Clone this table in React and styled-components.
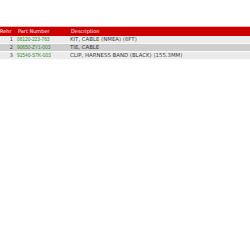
import styled, { createGlobalStyle } from "styled-components"

const GlobalStyle = createGlobalStyle`
  html, body {
    margin: 0;
    padding: 0;
    background: #fff;
  }
  body {
    font-family: "DejaVu Sans", Verdana, sans-serif;
  }
`

const Page = styled.div`
  padding-top: 26px;
`

const Table = styled.table`
  width: 100%;
  table-layout: fixed;
  border-collapse: collapse;
  border-top: 1px solid #f4b8b8;
  font-size: 5px;
  line-height: 7px;
`

const HeadCell = styled.th`
  background: #cc0000;
  color: #fff;
  font-weight: normal;
  text-align: left;
  padding: 0 0 0 ${(p) => p.$pad ?? 1}px;
  height: 9px;
  white-space: nowrap;
  overflow: hidden;
  width: ${(p) => p.$w || "auto"};
`

const Row = styled.tr`
  background: ${(p) => (p.$alt ? "#cecece" : "#ececec")};
  border-bottom: 1px solid #fafafa;
`

const Cell = styled.td`
  padding: 0 ${(p) => p.$padR ?? 0}px 0 ${(p) => p.$pad ?? 1}px;
  height: 7px;
  white-space: nowrap;
  overflow: hidden;
  text-align: ${(p) => p.$align || "left"};
  color: #3c3c3c;
`

const PartNo = styled(Cell)`
  color: #2f8f2f;
  font-family: "Liberation Sans", Arial, sans-serif;
  font-size: 4.8px;
`

const Desc = styled(Cell)`
  font-size: 5.4px;
`

const parts = [
  { n: 1, num: "06120-223-763", desc: "KIT, CABLE (NMEA) (6FT)" },
  { n: 2, num: "90650-ZY1-003", desc: "TIE, CABLE" },
  { n: 3, num: "91540-STK-003", desc: "CLIP, HARNESS BAND (BLACK) (155.3MM)" },
]

const App = () => {
  return (
    <Page>
      <GlobalStyle />
      <Table>
        <thead>
          <tr>
            <HeadCell $w="16px" $pad={0}>Rehr</HeadCell>
            <HeadCell $w="52px" $pad={2}>Part Number</HeadCell>
            <HeadCell $pad={1}>Description</HeadCell>
          </tr>
        </thead>
        <tbody>
          {parts.map((p, i) => (
            <Row key={p.n} $alt={i % 2 === 1}>
              <Cell $align="right" $padR={3}>{p.n}</Cell>
              <PartNo $pad={1}>{p.num}</PartNo>
              <Desc $pad={0}>{p.desc}</Desc>
            </Row>
          ))}
        </tbody>
      </Table>
    </Page>
  )
}

export default App
